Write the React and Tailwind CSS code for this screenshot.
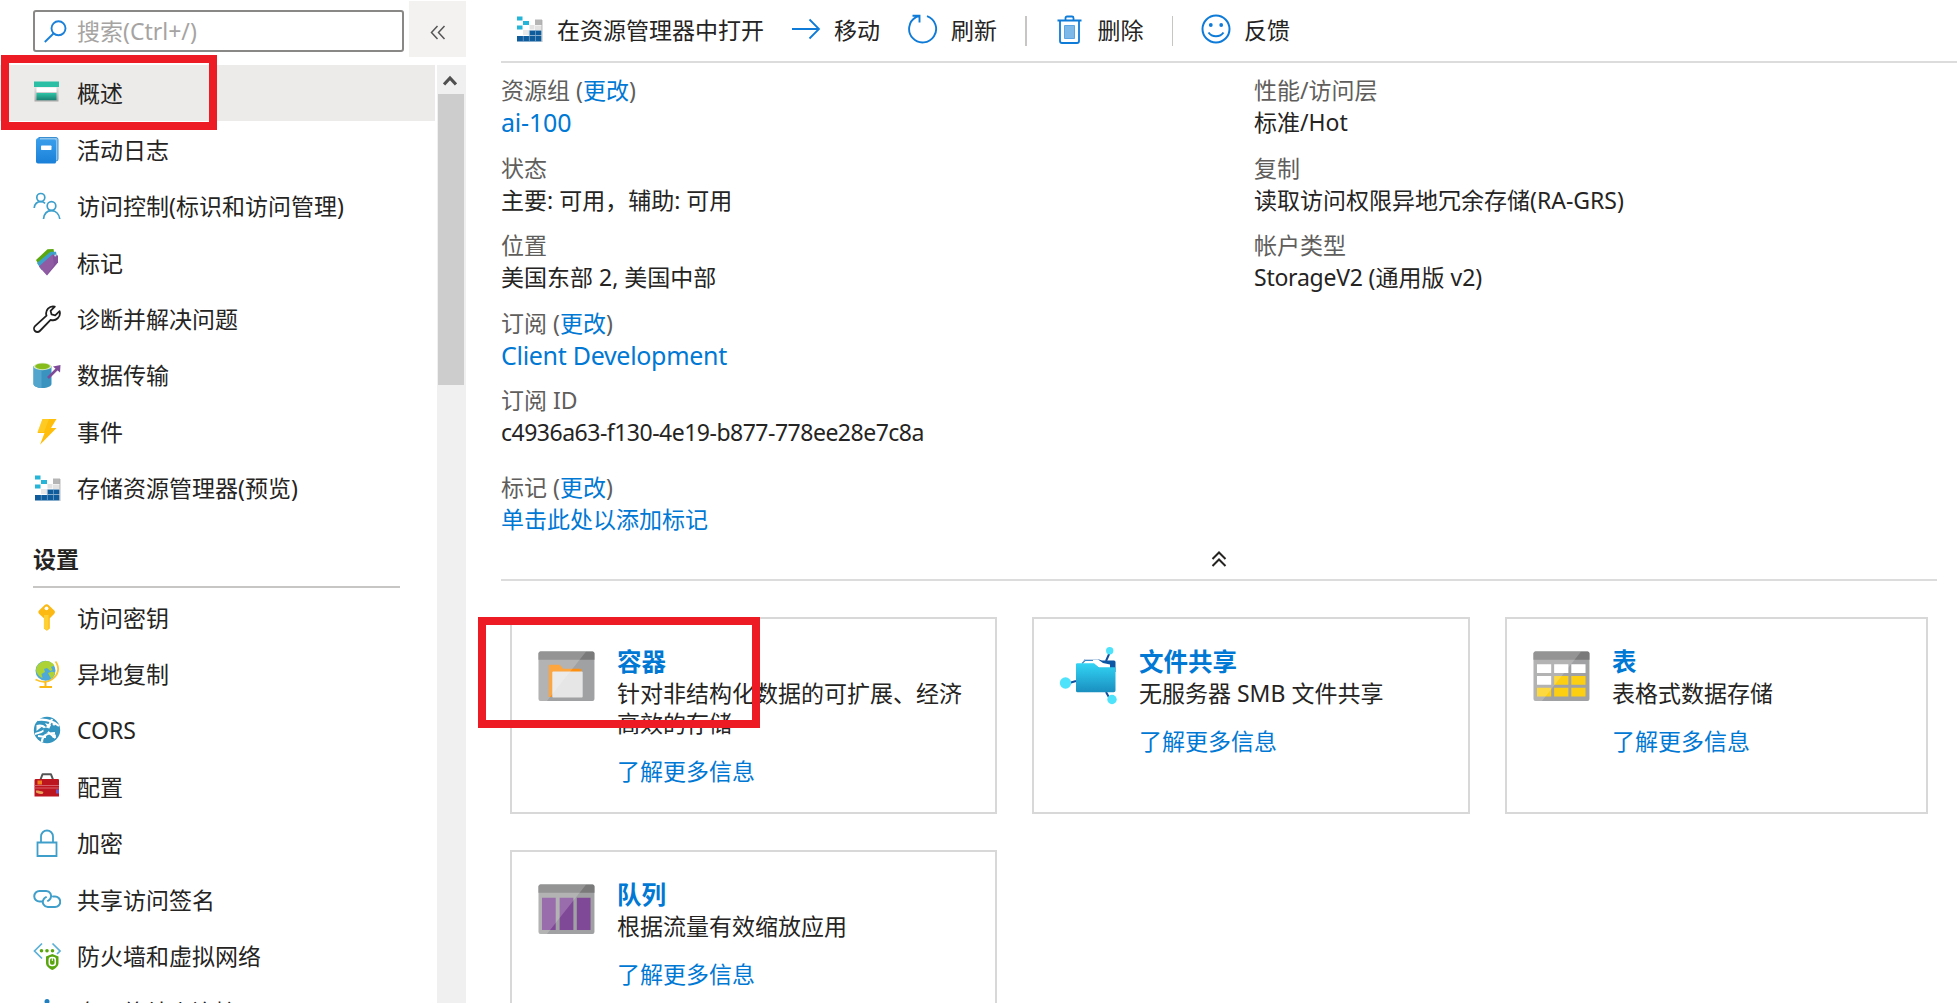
import React from "react";

const Svg = ({ s = 28, vb = 28, children, className = "" }) => (
  <svg width={s} height={s} viewBox={`0 0 ${vb} ${vb}`} fill="none" className={`block shrink-0 ${className}`}>
    {children}
  </svg>
);

const Overview = () => (
  <Svg>
    <defs>
      <linearGradient id="ov" x1="0" y1="0" x2="0" y2="1"><stop offset="0" stopColor="#2fc5a8" /><stop offset="1" stopColor="#1a7f72" /></linearGradient>
      <linearGradient id="ovs" x1="0" y1="0" x2="0" y2="1"><stop offset="0" stopColor="#e4e4e4" /><stop offset="1" stopColor="#a8a8a8" /></linearGradient>
    </defs>
    <rect x="1" y="2.500" width="25" height="5.500" fill="#2bbfa5" />
    <rect x="1.500" y="8" width="24" height="14.500" fill="url(#ovs)" />
    <rect x="3.500" y="8.500" width="20" height="4.500" fill="#fff" />
    <rect x="3.500" y="14" width="20" height="7.200" fill="url(#ov)" />
  </Svg>
);
const Log = () => (
  <Svg>
    <defs>
      <linearGradient id="lg" x1="0" y1="0" x2="0" y2="1"><stop offset="0" stopColor="#3aa0ec" /><stop offset="1" stopColor="#1a80d8" /></linearGradient>
    </defs>
    <path d="M5.500 1.500H23a2 2 0 0 1 2 2V23a2 2 0 0 1-2 2" fill="#8cc4ee" stroke="#3b8fd0" strokeWidth="1" />
    <path d="M3 4.500A2.500 2.500 0 0 1 5.500 2H7v1.500H21.500A1.500 1.500 0 0 1 23 5V26a1.500 1.500 0 0 1-1.500 1.500H5A2 2 0 0 1 3 25.500Z" fill="url(#lg)" />
    <rect x="8" y="9.500" width="10.500" height="4.500" rx=".7" fill="#fff" />
  </Svg>
);
const Users = () => (
  <Svg>
    <g stroke="#3c9fcc" strokeWidth="1.700">
      <circle cx="7.800" cy="5.500" r="4" />
      <path d="M1.200 16c.5-4 3-6.300 6.600-6.300 1.800 0 3.200.6 4.300 1.600" />
      <circle cx="18.500" cy="14" r="4.300" />
      <path d="M10.500 27c.6-5 3.600-8.300 8-8.300s7.600 3.300 8.300 8.300" />
    </g>
  </Svg>
);
const Tag = () => (
  <Svg>
    <path d="M3 12 14.500 1.300l6-.3 1 6L7 19Z" fill="#5aa80d" />
    <path d="M4 15 17.500 3.800l5.500 0 1 5L8.500 22Z" fill="#3f9fcb" />
    <path d="M6 18.500 19.500 6.500 25 7.500V14.500L14 27.500Z" fill="#84509b" />
    <path d="m6 18.500 13.500-12L21 17l-7.500 10Z" fill="#9a68ae" opacity=".5" />
    <circle cx="22.300" cy="7.500" r="1.100" fill="#b8d8ea" />
  </Svg>
);
const Wrench = () => (
  <Svg>
    <path d="M21.800 1.600a7 7 0 0 0-8.300 9L2 21.200a3.300 3.300 0 0 0 4.800 4.800L17.600 14.800a7 7 0 0 0 9-8.600l-4.400 4.100-3.700-.9-.9-3.500Z" stroke="#1f1f1f" strokeWidth="1.800" strokeLinejoin="round" />
  </Svg>
);
const Transfer = () => (
  <Svg>
    <path d="M.5 5v18c0 2.200 4 4 9 4s9-1.800 9-4V5Z" fill="#3a93bf" />
    <path d="M.5 5v18c0 2.200 4 4 8 4V5Z" fill="#52a5cd" />
    <ellipse cx="9.500" cy="5.500" rx="9" ry="3.700" fill="#d7e9c0" />
    <ellipse cx="9.500" cy="5.300" rx="7.400" ry="2.900" fill="#86bd1c" />
    <path d="M15 17 25 7" stroke="#7f4a98" strokeWidth="2.600" />
    <path d="M20 5.500 27.500 4 27 11.500Z" fill="#7f4a98" />
  </Svg>
);
const Bolt = () => (
  <Svg>
    <path d="M9.500 1H23.500L18 10h5.500L7 26.800 11.500 15H4.500Z" fill="#ffbe0a" />
    <path d="M9.500 1H16L11 14H4.500Z" fill="#ffd02e" opacity=".7" />
  </Svg>
);
const Explorer = () => (
  <Svg>
    <g fill="#25b5d8">
      <path d="M2 1.500h5.500v4H2zM8 6h6v4H8zM2 10.500h5.500v4H2z" />
    </g>
    <path d="M20 4.500h7v5.500h-7z" fill="#b5b5b5" />
    <path d="M14.500 10h5v4.500h-5zM20 10.500h7v4.500h-7z" fill="#e2e2e2" />
    <path d="M8 15h6v5H8z" fill="#e8e8e8" />
    <path d="M14.500 15.500h12v5h-12zM2 21h24.500v5.500H2z" fill="#0f5c9c" />
    <path d="M8.300 21v5.500M14.400 15.500v11M20.500 15.500v11" stroke="#7fa9cd" strokeWidth=".7" />
    <path d="M27 5v22" stroke="#aaa" strokeWidth=".8" />
  </Svg>
);
const Key = () => (
  <Svg>
    <path d="M13.500 1.200c1 0 1.500.4 2 .9l5.800 5.500c.9.900.9 2.200 0 3.100l-4.500 4.600v10.300l-2.900 2.200-3-2.200V15.300L6 10.700c-.9-.9-.9-2.200 0-3.100l5.700-5.500c.5-.5 1-.9 1.800-.9Z" fill="#fdb913" />
    <path d="M11 12h4.500v14l-1.600 1.200-2.900-2Z" fill="#ffd034" />
    <circle cx="13.500" cy="5.300" r="1.900" fill="#fff" />
  </Svg>
);
const Globe = () => (
  <Svg>
    <path d="M22.500 1.500c4.500 6 3 13.500-3.500 17.700C14.500 22.500 8.500 22.500 2.500 19.500" stroke="#fbc52c" strokeWidth="1.800" />
    <path d="M12.500 22v4M6.500 27h12.500" stroke="#fbb813" strokeWidth="2" />
    <circle cx="12.500" cy="10.800" r="10" fill="#4ea9d8" />
    <path d="M4 6C6.500 2.500 10 .9 13 .9c3.500 0 6.500 1.600 8.500 4.600L18 7l1.500 3-2 1-3.500-3-3 1 1 3-3.500 2 1 4-2-1C3 13.500 2.200 10 4 6Z" fill="#acd235" />
    <path d="m15 13 4-1.500 3 1c-.7 2.700-2 4.700-4 6Z" fill="#acd235" />
  </Svg>
);
const Cors = () => (
  <Svg>
    <circle cx="14" cy="14" r="13.200" fill="#3495c1" />
    <g stroke="#fff" strokeWidth="2.200">
      <path d="M4.500 4C12 3 20 5 26 10M2 18c7-1 14-6 17-15M12.500 14l10 8M4 10c4-1 8 0 9 4M9 26c0-6 4-9 13-9M5 20l8 1" />
    </g>
    <path d="m12 7 6 2-2 4M3.500 9l5 2-5 4Z" fill="#fff" />
    <circle cx="13" cy="14" r="2.600" fill="#3495c1" />
    <circle cx="21" cy="8" r="1.500" fill="#fff" />
    <circle cx="21" cy="20" r="2" fill="#fff" />
  </Svg>
);
const Toolbox = () => (
  <Svg>
    <path d="M7.500 7.500 9.500 2.300h8.500l2 5.200" stroke="#555" strokeWidth="2" strokeLinejoin="round" />
    <path d="M1.500 8.500Q1.500 7 2.500 7H25q1 0 1 1V24.500H1.500Z" fill="#bd1520" />
    <path d="M1.500 13.500H26M1.500 16H26" stroke="#d8606a" strokeWidth="1.200" />
    <path d="M4.500 8.500h4.500v4H4.500z" fill="#f0821e" />
    <path d="M3 18.500c3 0 5 .5 7.500 1.500l-1 2c-3 0-4-.5-6.500-1.500Z" fill="#e8a05a" />
    <path d="M23 17.500h3v4h-3z" fill="#7058c8" />
  </Svg>
);
const Lock = () => (
  <Svg>
    <path d="M4.500 13.500h19V27h-19Z" stroke="#3f9fca" strokeWidth="1.800" />
    <path d="M8 13.500V7.500a6 6 0 0 1 12 0v6" stroke="#3f9fca" strokeWidth="1.800" />
  </Svg>
);
const Chain = () => (
  <Svg>
    <g stroke="#3f9fca" strokeWidth="2" strokeLinecap="round">
      <path d="M8.500 16.500H6.500a5 5 0 0 1 0-10.500H13a5 5 0 0 1 4.500 7.500c-.5 1-1.400 1.800-2.500 2.300" />
      <path d="M20 11.500h2a5 5 0 0 1 0 10.500h-7a5 5 0 0 1-4.500-7.500c.5-1 1.400-1.800 2.500-2.300" />
    </g>
  </Svg>
);
const Firewall = () => (
  <Svg>
    <path d="M9 1.500 1.500 9 9 16.500M19.500 1.500 27 9l-3 3" stroke="#5bb0d8" strokeWidth="1.700" />
    <g fill="#59a60f">
      <circle cx="8.500" cy="8.800" r="1.800" /><circle cx="14" cy="8.800" r="1.800" /><circle cx="19.500" cy="8.800" r="1.800" />
      <path d="M13 14.500 19.300 12l6.200 2.500v6.500c0 3-3 5.500-6.200 7-3.300-1.500-6.300-4-6.300-7Z" />
    </g>
    <rect x="16.300" y="15.500" width="6" height="8" rx="2.500" stroke="#fff" strokeWidth="1.500" />
    <path d="M19.300 15.500v3.500" stroke="#fff" />
  </Svg>
);
const Endpoint = () => (
  <Svg>
    <circle cx="14" cy="3.500" r="2.500" fill="#1f7fbf" />
    <path d="M14 5v18" stroke="#1f7fbf" strokeWidth="2" />
  </Svg>
);

const Frame = ({ children }) => (
  <svg width="57" height="51" viewBox="0 0 58 52" fill="none" className="block shrink-0">
    <rect x=".5" y=".5" width="57" height="50.500" rx="2" fill="#a0a1a2" />
    <path d="M.5 2.500A2 2 0 0 1 2.500 .5H55.500A2 2 0 0 1 57.500 2.500V9H.5Z" fill="#7a7a7a" />
    {children}
    <path d="M.5 2A1.500 1.500 0 0 1 2 .5H49L9 51H2.500a2 2 0 0 1-2-2Z" fill="#fff" opacity=".2" />
  </svg>
);
const BlobIcon = () => (
  <Frame>
    <path d="M11 47V15a1 1 0 0 1 1-1H22l3.500 4H43a1 1 0 0 1 1 1v4H16L14 47Z" fill="#fd8f10" />
    <rect x="14.500" y="21" width="31" height="26.500" rx="1" fill="#e6e6e6" />
  </Frame>
);
const QueueIcon = () => (
  <Frame>
    <path d="M4 14h14v33H4zM22 14h14v33H22zM39.500 14h14v33h-14z" fill="#804998" />
  </Frame>
);
const TableIcon = () => (
  <Frame>
    <path d="M4 13.500h14.500v9H4zM21.500 13.500H36v9H21.500zM39 13.500h14.500v9H39zM4 25.500h14.500v9H4z" fill="#fff" />
    <path d="M21.500 25.500H36v9H21.500zM39 25.500h14.500v9H39zM4 37.500h14.500v9H4zM21.500 37.500H36v9H21.500zM39 37.500h14.500v9H39z" fill="#fccf12" />
  </Frame>
);
const ShareIcon = () => (
  <svg width="58" height="58" viewBox="0 0 58 58" fill="none" className="block shrink-0 overflow-visible">
    <defs>
      <linearGradient id="sh" x1="0" y1="0" x2="0" y2="1"><stop offset="0" stopColor="#32d4f5" /><stop offset="1" stopColor="#1a8fbf" /></linearGradient>
    </defs>
    <path d="M46 14 50 5M16 34 6 37M46 45l5 9" stroke="#0f4f9e" strokeWidth="2" />
    <path d="M24 12.500h15l3 1H54a1.500 1.500 0 0 1 1.500 1.500v10H22Z" fill="#0c57a5" />
    <path d="M21 18 24.500 12.500H38l5 3.500 7 1.500v4H40L34 17Z" fill="#fff" />
    <path d="M22 16.500 25 13.500H33" stroke="#3b86c6" strokeWidth="1.200" />
    <path d="M16 17.500a1.200 1.200 0 0 1 1.200-1.200H34l4.500 4H54.300A1.200 1.200 0 0 1 55.500 21.500V43.500a1.800 1.800 0 0 1-1.800 1.800H17.500A1.500 1.500 0 0 1 16 43.800Z" fill="url(#sh)" />
    <circle cx="49.700" cy="3.800" r="3.700" fill="#4fe3fb" />
    <circle cx="5.500" cy="36" r="5.700" fill="#4fe3fb" />
    <circle cx="52" cy="52.500" r="4.700" fill="#4fe3fb" />
  </svg>
);

const NavRow = ({ icon, label, active }) => (
  <div className={`flex h-[56.400px] w-[435px] shrink-0 items-center pl-[33px] ${active ? "bg-[#edebe9]" : ""}`}>
    {icon}
    <span className="ml-4 pt-px">{label}</span>
  </div>
);

const Change = ({ children }) => (
  <>{children} (<span className="text-[#0078d4]">更改</span>)</>
);

const Field = ({ label, value, link, cls = "" }) => (
  <div className="mb-[13.600px] whitespace-nowrap">
    <div className="h-8 leading-8 text-[#605e5c]">{label}</div>
    <div className={`h-8 leading-8 ${link ? "text-[#0078d4]" : ""} ${cls}`}>{value}</div>
  </div>
);

const Card = ({ icon, title, text, className = "" }) => (
  <div className={`flex h-[197px] border-2 border-[#d8d8d8] pl-[26px] pt-[32px] ${className}`}>
    <div className="w-[79px] shrink-0">{icon}</div>
    <div className="leading-[30px]">
      <div className="-mt-[5px] h-8 text-[24.500px] font-bold leading-8 text-[#0078d4]">{title}</div>
      <div>{text}</div>
      <div className="mt-[17.500px] text-[#0078d4]">了解更多信息</div>
    </div>
  </div>
);

const Sep = () => <div className="h-[30px] w-[1.500px] bg-[#c8c6c4]" />;

export default function App() {
  return (
    <div className="relative flex h-[1003px] w-[1957px] overflow-hidden bg-white font-['Noto_Sans','Noto_Sans_CJK_SC',sans-serif] text-[23px] text-[#252423]">
      <aside className="flex w-[466px] shrink-0 flex-col">
        <div className="flex h-[65px] shrink-0 pt-px">
          <div className="ml-[33px] mt-[9px] flex h-[42px] w-[371px] items-center rounded-[3px] border-2 border-[#8a8886] pl-[9px]">
            <svg width="23" height="23" viewBox="0 0 23 23" fill="none" stroke="#1a80d9" strokeWidth="1.900">
              <circle cx="14.500" cy="8.300" r="7" />
              <path d="M9.500 13.500.8 22" />
            </svg>
            <span className="ml-[10px] text-[#a6a4a2]">搜索(Ctrl+/)</span>
          </div>
          <div className="ml-[5px] flex h-14 w-[57px] items-center justify-center bg-[#f3f2f1]">
            <svg width="16" height="16" viewBox="0 0 16 16" fill="none" stroke="#555" strokeWidth="1.500" className="mt-2">
              <path d="M7.500 1 1.500 7.500l6 6.500M14.500 1l-6 6.500 6 6.500" />
            </svg>
          </div>
        </div>
        <div className="flex min-h-0 flex-1">
          <nav className="flex w-[437px] flex-col overflow-hidden">
            <NavRow active icon={<Overview />} label="概述" />
            <NavRow icon={<Log />} label="活动日志" />
            <NavRow icon={<Users />} label="访问控制(标识和访问管理)" />
            <NavRow icon={<Tag />} label="标记" />
            <NavRow icon={<Wrench />} label="诊断并解决问题" />
            <NavRow icon={<Transfer />} label="数据传输" />
            <NavRow icon={<Bolt />} label="事件" />
            <NavRow icon={<Explorer />} label="存储资源管理器(预览)" />
            <div className="ml-[33px] h-[72px] w-[367px] shrink-0 border-b-2 border-[#c8c6c4] pt-[25px] font-bold leading-[36px]">设置</div>
            <div className="h-px shrink-0" />
            <NavRow icon={<Key />} label="访问密钥" />
            <NavRow icon={<Globe />} label="异地复制" />
            <NavRow icon={<Cors />} label="CORS" />
            <NavRow icon={<Toolbox />} label="配置" />
            <NavRow icon={<Lock />} label="加密" />
            <NavRow icon={<Chain />} label="共享访问签名" />
            <NavRow icon={<Firewall />} label="防火墙和虚拟网络" />
            <NavRow icon={<Endpoint />} label="专用终结点连接" />
          </nav>
          <div className="w-[29px] bg-[#f0f0f0]">
            <div className="flex h-[29px] items-center justify-center">
              <svg width="14" height="12" viewBox="0 0 14 12" fill="none" stroke="#505050" strokeWidth="3.200" className="-ml-[3px] mt-[3px]">
                <path d="m1 9.500 6-6.500 6 6.500" />
              </svg>
            </div>
            <div className="ml-px h-[291px] w-[26px] bg-[#cdcdcd]" />
          </div>
        </div>
      </aside>

      <main className="flex min-w-0 flex-1 flex-col pl-[35px]">
        <div className="flex h-[63px] shrink-0 items-center border-b-2 border-[#dcdcdc] pl-[14px]">
          <div className="-mt-1"><Explorer /></div>
          <span className="ml-[14px] w-[207px]">在资源管理器中打开</span>
          <svg width="29" height="22" viewBox="0 0 29 22" fill="none" stroke="#0f7bd8" strokeWidth="1.800" className="-mt-1 ml-[28px]">
            <path d="M0 11h27M17.500 1.500 27 11l-9.500 9.500" />
          </svg>
          <span className="ml-[13px]">移动</span>
          <svg width="30" height="30" viewBox="0 0 30 30" fill="none" stroke="#0f7bd8" strokeWidth="1.900" className="-mt-1 ml-[28px]">
            <path d="M19 2.200A13.500 13.500 0 1 1 8 3.200l3-1.200M4.500 1.800H11.500V8.500" />
          </svg>
          <span className="ml-[13px] mr-[28px]">刷新</span>
          <Sep />
          <svg width="25" height="30" viewBox="0 0 25 30" fill="none" stroke="#0f7bd8" strokeWidth="1.800" className="-mt-0.5 ml-[30px]">
            <path d="M.5 5.500h24M3 5.500V26a2 2 0 0 0 2 2h15a2 2 0 0 0 2-2V5.500M8.500 5.500V3a1.500 1.500 0 0 1 1.500-1.500h5A1.500 1.500 0 0 1 16.500 3v2.500" />
            <path d="M7.500 10.500h10v13h-10z" fill="#7db8e8" stroke="#5ba5e2" strokeWidth="1" />
          </svg>
          <span className="ml-[16px] mr-[28px]">删除</span>
          <Sep />
          <svg width="30" height="30" viewBox="0 0 30 30" fill="none" stroke="#0f7bd8" strokeWidth="2" className="-mt-1 ml-[28px]">
            <circle cx="15" cy="15" r="13.500" />
            <path d="M7.500 18.500c3.500 5 11.500 5 15 0" />
            <circle cx="9.800" cy="11" r="1.900" fill="#0f7bd8" stroke="none" />
            <circle cx="20.200" cy="11" r="1.900" fill="#0f7bd8" stroke="none" />
          </svg>
          <span className="ml-[13px]">反馈</span>
        </div>

        <section className="mr-5 flex h-[518px] shrink-0 flex-col border-b-2 border-[#dcdcdc] pt-[11px]">
          <div className="flex h-[469px]">
            <div className="w-[753px]">
              <Field label={<Change>资源组</Change>} value="ai-100" link cls="text-[25px] tracking-[-0.2px]" />
              <Field label="状态" value="主要: 可用，辅助: 可用" />
              <Field label="位置" value="美国东部 2, 美国中部" />
              <Field label={<Change>订阅</Change>} value="Client Development" link cls="text-[25px] tracking-[-0.3px]" />
              <Field label="订阅 ID" value="c4936a63-f130-4e19-b877-778ee28e7c8a" cls="tracking-[-0.500px]" />
              <div className="h-[9px]" />
              <Field label={<Change>标记</Change>} value="单击此处以添加标记" link />
            </div>
            <div>
              <Field label="性能/访问层" value="标准/Hot" />
              <Field label="复制" value="读取访问权限异地冗余存储(RA-GRS)" />
              <Field label="帐户类型" value={<><span className="tracking-[-0.250px]">StorageV2</span> (通用版 v2)</>} />
            </div>
          </div>
          <svg width="16" height="16" viewBox="0 0 16 16" fill="none" stroke="#252423" strokeWidth="2" className="ml-[710px] mt-[8px]">
            <path d="m1.500 8 6.500-6.500L14.500 8M1.500 15 8 8.500l6.500 6.500" />
          </svg>
        </section>

        <div className="ml-[9px] mt-[36px] grid grid-cols-[487px_438px_423px] gap-x-[35px] gap-y-[36px]">
          <Card icon={<BlobIcon />} title="容器" text={<>针对非结构化数据的可扩展、经济<br />高效的存储</>} />
          <Card icon={<div className="-mt-1"><ShareIcon /></div>} title="文件共享" text="无服务器 SMB 文件共享" />
          <Card icon={<TableIcon />} title="表" text="表格式数据存储" />
          <Card icon={<QueueIcon />} title="队列" text="根据流量有效缩放应用" />
        </div>
      </main>

      <div className="absolute left-px top-[55px] h-[75px] w-[216px] border-8 border-[#ed1c24]" />
      <div className="absolute left-[478px] top-[617px] h-[111px] w-[282px] border-8 border-[#ed1c24]" />
    </div>
  );
}
